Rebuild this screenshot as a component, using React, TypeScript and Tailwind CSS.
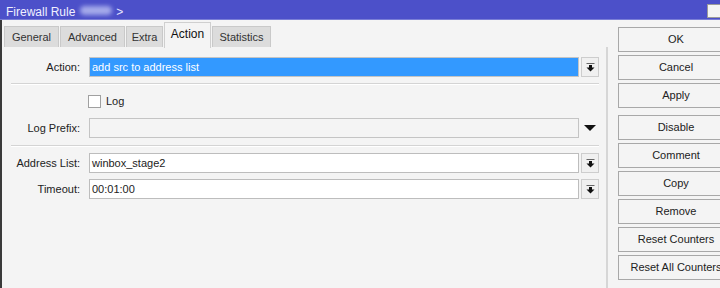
import React from 'react';

const tabs = [
  { name: 'General', w: 'w-[55px]' },
  { name: 'Advanced', w: 'w-[65px]' },
  { name: 'Extra', w: 'w-[37px]' },
  { name: 'Action', w: 'w-[47px]' },
  { name: 'Statistics', w: 'w-[59px]' },
];

const buttons = ['OK', 'Cancel', 'Apply', 'Disable', 'Comment', 'Copy', 'Remove', 'Reset Counters', 'Reset All Counters'];

const DropIcon = () => (
  <svg width="9" height="9" viewBox="0 0 9 9">
    <rect x="0.5" y="0" width="8" height="1" fill="#666" />
    <rect x="3" y="2" width="3" height="3" fill="#111" />
    <polygon points="0.5,4.5 8.5,4.5 4.5,8.5" fill="#111" />
  </svg>
);

const DropButton = () => (
  <div className="w-[18px] h-[20px] ml-[2px] shrink-0 flex items-center justify-center bg-[#f0f0f0] border border-[#cdcdcd]">
    <DropIcon />
  </div>
);

const Label = ({ text }: { text: string }) => (
  <div className="w-[79px] shrink-0 pr-[1px] text-right text-[#222]">{text}</div>
);

export default function App() {
  return (
    <div
      className="w-[720px] h-[288px] overflow-hidden bg-[#f4f4f4] flex flex-col text-[11px] text-[#222]"
      style={{ fontFamily: '"Liberation Sans", Arial, sans-serif' }}
    >
      {/* 標題列 */}
      <div className="h-[20px] shrink-0 bg-[#4c50c9] border-b border-[#7a7ed6] flex items-start pl-[6px] text-white text-[12px] overflow-hidden">
        <span className="mt-[3px] text-[#f0f0ff]">Firewall Rule</span>
        <span className="mt-[6px] ml-[5px] w-[32px] h-[9px] rounded-full bg-[#a4a9ea] blur-[2px]" />
        <span className="mt-[3px] ml-[4px] text-[#e8e8ff]">&gt;</span>
        <div className="ml-auto mr-[-6px] mt-[4px] w-[19px] h-[14px] shrink-0 border border-[#9a9a9a] bg-[#f4f4f4]" />
      </div>

      <div className="flex-1 flex border-l-2 border-[#3a3a3a] min-h-0">
        {/* 左側：分頁與表單 */}
        <div className="w-[606px] shrink-0 flex flex-col">
          <div className="h-[27px] flex items-end pl-[2px] gap-[1px]">
            {tabs.map(tab =>
              tab.name === 'Action' ? (
                <div
                  key={tab.name}
                  className={`${tab.w} h-[26px] mb-[-1px] bg-[#f4f4f4] border border-b-0 border-[#cfcfcf] flex items-center justify-center pb-[3px] text-[12px] text-[#111]`}
                >
                  {tab.name}
                </div>
              ) : (
                <div
                  key={tab.name}
                  className={`${tab.w} h-[21px] bg-[#dcdcdc] border border-b-0 border-[#c9c9c9] flex items-center justify-center text-[#333]`}
                >
                  {tab.name}
                </div>
              )
            )}
          </div>

          <div className="flex-1 border-r-2 border-[#d6d6d6] pt-[10px]">
            {/* Action */}
            <div className="flex items-center h-[20px]">
              <Label text="Action:" />
              <div className="ml-[8px] w-[490px] h-[20px] shrink-0 border border-[#c4c4c4] bg-[#3399ff] text-white pl-[2px] flex items-center">
                add src to address list
              </div>
              <DropButton />
            </div>

            <div className="ml-[9px] mt-[6px] w-[588px] h-[1px] bg-[#d4d4d4] border-b border-white box-content" />

            {/* Log */}
            <div className="flex items-center h-[13px] mt-[10px]">
              <div className="w-[79px]" />
              <div className="ml-[7px] w-[13px] h-[13px] border border-[#a0a0a0] bg-white" />
              <span className="ml-[5px]">Log</span>
            </div>

            {/* Log Prefix */}
            <div className="flex items-center h-[20px] mt-[10px]">
              <Label text="Log Prefix:" />
              <div className="ml-[8px] w-[490px] h-[20px] shrink-0 border border-[#c4c4c4] bg-[#f4f4f4]" />
              <div className="w-[18px] ml-[2px] flex items-center justify-center">
                <svg width="12" height="6" viewBox="0 0 12 6">
                  <polygon points="0,0 12,0 6,6" fill="#111" />
                </svg>
              </div>
            </div>

            <div className="ml-[9px] mt-[7px] w-[588px] h-[1px] bg-[#d4d4d4] border-b border-white box-content" />

            {/* Address List */}
            <div className="flex items-center h-[20px] mt-[6px]">
              <Label text="Address List:" />
              <div className="ml-[8px] w-[490px] h-[20px] shrink-0 border border-[#bdbdbd] bg-white pl-[2px] flex items-center">
                winbox_stage2
              </div>
              <DropButton />
            </div>

            {/* Timeout */}
            <div className="flex items-center h-[20px] mt-[6px]">
              <Label text="Timeout:" />
              <div className="ml-[8px] w-[490px] h-[20px] shrink-0 border border-[#bdbdbd] bg-white pl-[2px] flex items-center">
                00:01:00
              </div>
              <DropButton />
            </div>
          </div>
        </div>

        {/* 右側按鈕 */}
        <div className="pl-[10px] pt-[7px] flex flex-col gap-[3px] shrink-0">
          {buttons.map(label => (
            <div
              key={label}
              className={`w-[116px] h-[25px] shrink-0 border border-[#a8a8a8] bg-[#f4f4f4] flex items-center justify-center text-[#222] ${label === 'Disable' ? 'mt-[4px]' : ''}`}
            >
              {label}
            </div>
          ))}
        </div>
      </div>
    </div>
  );
}
